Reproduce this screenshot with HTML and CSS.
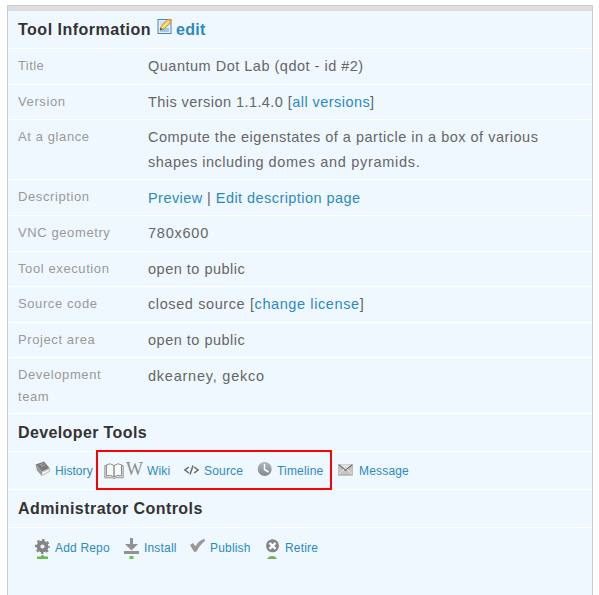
FILE: index.html
```html
<!DOCTYPE html>
<html lang="en">
<head>
<meta charset="utf-8">
<title>Tool Information</title>
<link rel="stylesheet" href="styles.css">
</head>
<body>
<main class="panel">
  <h3 class="head first">Tool Information<svg class="edit-icon" width="16" height="18" viewBox="0 0 16 18"><rect x="1" y="2.500" width="13" height="14" fill="#e5f0fb" stroke="#4a83b8"/><path d="M3 11h9v4H3z" fill="#9cc8f0"/><path d="M3 5h6M3 7h4" stroke="#bcd3e6"/><path d="M3 13l1.300-4L11 2.200l3.200 3L7.200 12z" fill="#f8cf5c" stroke="#a5792f" stroke-width=".8"/><path d="M5.500 10.500L12 4" stroke="#fff0a8"/><path d="M10.500 2.700l1.500-1.500 3.200 3-1.500 1.500z" fill="#eba455"/><path d="M3 13l.7-2.200 1.600 1.500z" fill="#333"/></svg><a href="#">edit</a></h3>
  <dl class="info">
    <div class="row"><dt class="snug">Title</dt><dd>Quantum Dot Lab (qdot - id #2)</dd></div>
    <div class="row short"><dt>Version</dt><dd class="snug-value">This version 1.1.4.0 [<a href="#">all versions</a>]</dd></div>
    <div class="row glance"><dt>At a glance</dt><dd>Compute the eigenstates of a particle in a box of various<br>shapes including <span class="loose">domes and pyramids.</span></dd></div>
    <div class="row low"><dt>Description</dt><dd class="snug-value"><a href="#">Preview</a> | <a href="#">Edit description page</a></dd></div>
    <div class="row"><dt>VNC geometry</dt><dd class="wide">780x600</dd></div>
    <div class="row short"><dt>Tool execution</dt><dd>open to public</dd></div>
    <div class="row"><dt>Source code</dt><dd class="license">closed source [<a href="#">change license</a>]</dd></div>
    <div class="row short"><dt>Project area</dt><dd>open to public</dd></div>
    <div class="row team"><dt>Development team</dt><dd class="wide">dkearney, gekco</dd></div>
  </dl>
  <h3 class="head dev">Developer Tools</h3>
  <div class="tools dev-tools">
    <a class="tool history" href="#"><svg width="16" height="20" viewBox="0 0 16 20"><path d="M2 8.500L7 14.500l7.500-4V7.500L7.500 11z" fill="#f2f2f2" stroke="#a5a5a5" stroke-width=".7"/><path d="M.5 3.500L9 .5l5.500 6.500L7 10.500z" fill="#7b7b7b"/><path d="M.5 3.500L7 10.500V15L2 9.500z" fill="#999"/><path d="M4.500 4l4-1.500M6 5.500l4-1.500" stroke="#aaa"/></svg><span>History</span></a>
    <a class="tool wiki" href="#"><svg width="21" height="20" viewBox="0 0 21 20"><path d="M2 4.500H.8V16.800H8.500l1.500 1 1.500-1h7.700V4.500H18" fill="#ddd" stroke="#999"/><path d="M10 4.500Q6 1.500 2.500 3.700v11.200q4-1.500 7.500 1zM10 4.500Q14 1.500 17.500 3.700v11.200q-4-1.500-7.500 1z" fill="#f8f8f8" stroke="#909090"/></svg><b class="wiki-mark">W</b><span>Wiki</span></a>
    <a class="tool source" href="#"><svg width="15" height="20" viewBox="0 0 15 20" fill="none" stroke="#666b70" stroke-width="1.500"><path d="M4.800 6L1 9l3.800 3M10.200 6L14 9l-3.800 3M9 4.500l-3 9"/></svg><span>Source</span></a>
    <a class="tool timeline" href="#"><svg width="15" height="20" viewBox="0 0 15 20"><defs><linearGradient id="clock" x2="0" y2="1"><stop stop-color="#b1b7bd"/><stop offset="1" stop-color="#828990"/></linearGradient></defs><circle cx="7.700" cy="8" r="7" fill="url(#clock)"/><path d="M7.500 3v5.500l4 2.500" fill="none" stroke="#fff" stroke-width="1.500"/></svg><span>Timeline</span></a>
    <a class="tool message" href="#"><svg width="16" height="20" viewBox="0 0 16 20"><rect x=".4" y="3.400" width="14.200" height="10.600" fill="#c5c5c5" stroke="#b8b8b8" stroke-width=".8"/><path d="M.5 3.500h14L7.500 9z" fill="#e2e2e2"/><path d="M.8 3.800l6.700 5.500 6.700-5.500" fill="none" stroke="#777" stroke-width="1.300"/><path d="M1 13l5-5M14 13L9 8" stroke="#e5e5e5"/><path d="M.5 14h14" stroke="#aaa"/></svg><span>Message</span></a>
    <div class="callout"></div>
  </div>
  <h3 class="head admin">Administrator Controls</h3>
  <div class="tools admin-tools">
    <a class="tool add" href="#"><svg width="15" height="22" viewBox="0 0 15 22"><circle cx="7.500" cy="8.500" r="4" fill="none" stroke="#858585" stroke-width="3.800"/><circle cx="7.500" cy="8.500" r="6.500" fill="none" stroke="#858585" stroke-width="2" stroke-dasharray="2.500 2.605" stroke-dashoffset="1.250"/><path d="M7 17h1l1.500 1.500H13V21H2v-2.500h3.500z" fill="#69bd45"/></svg><span>Add Repo</span></a>
    <a class="tool install" href="#"><svg width="15" height="22" viewBox="0 0 15 22"><path d="M6 0h3v6h5l-6.500 6.500L1 6h5zM0 13h15v3H0z" fill="#929292"/><path d="M5.500 18h4v3h-4z" fill="#69c54a"/></svg><span>Install</span></a>
    <a class="tool publish" href="#"><svg width="15" height="22" viewBox="0 0 15 22"><path d="M0 7L3 5l2.500 3.200Q9 2 14.800.8v2.400Q9.500 7 6.500 13.800H4z" fill="#999"/></svg><span>Publish</span></a>
    <a class="tool retire" href="#"><svg width="14" height="22" viewBox="0 0 14 22"><circle cx="6.500" cy="7.800" r="6.500" fill="#858383"/><path d="M3.500 4.800l6 6M9.500 4.800l-6 6" stroke="#fff" stroke-width="2.400"/><path d="M1 21q1.500-3 5-3t5 3z" fill="#78ad60"/></svg><span>Retire</span></a>
  </div>
</main>
</body>
</html>
```

FILE: styles.css
```css
body{margin:0;background:#fff;font-family:"Liberation Sans",sans-serif;overflow:hidden}
.panel{margin:5px 6px 0 7px;border:1px solid #ccc;border-bottom:0;height:590px;background:#f0f8ff;box-sizing:border-box}
.head{margin:0;font-size:16px;line-height:37px;height:37px;padding-left:10px;border-bottom:1px solid #fff;color:#333;letter-spacing:.5px}
.first{border-top:5px solid #ddd;display:flex}
.first a{letter-spacing:.3px}
.edit-icon{margin:6px 3px 0 6px}
.dev{letter-spacing:.38px}
.admin{letter-spacing:.44px}
a{color:#2b8abf;text-decoration:none}
.info{margin:0}
.row{display:flex;height:35px;border-bottom:1px solid #fff;padding-left:10px;font-size:14.5px;color:#666}
.short{height:34px}
.glance{height:59px}
.team{height:55px}
dt{width:130px;box-sizing:border-box;padding-right:20px;font-size:13px;line-height:22px;padding-top:6px;color:#999;letter-spacing:.6px}
dd{margin:0;line-height:25px;padding-top:5px;letter-spacing:.5px}
.low dd{padding-top:6px}
.team dd{padding-top:6px}
.snug{letter-spacing:.4px}
.snug-value{letter-spacing:.44px}
.loose{letter-spacing:.7px}
.wide{letter-spacing:.77px}
.license{letter-spacing:.6px}
.tools{display:flex;position:relative;height:37px;border-bottom:1px solid #fff;font-size:12px;line-height:14px}
.dev-tools{padding-left:27px}
.tool{display:flex;align-items:flex-start;box-sizing:border-box;padding-top:9px;gap:5px;white-space:nowrap}
.tool svg{flex:none}
.tool span{padding-top:3px;letter-spacing:.18px}
.history{width:69px}
.tool.history span{letter-spacing:.05px}
.history svg{margin-right:-1px}
.wiki{width:80px;gap:0}
.wiki-mark{width:22px;box-sizing:border-box;padding-left:1px;font:normal 18px/18px "Liberation Serif",serif;color:#8b8b8b;margin-top:-1px}
.source{width:73px}
.timeline{width:81px}
.callout{position:absolute;left:88px;top:-2px;width:236px;height:40px;box-sizing:border-box;border:2px solid #f00}
.admin-tools{padding-left:27px;border-bottom:0}
.admin-tools .tool{padding-top:10px}
.add{width:89px}
.install{width:66px}
.publish{width:76px}
```
